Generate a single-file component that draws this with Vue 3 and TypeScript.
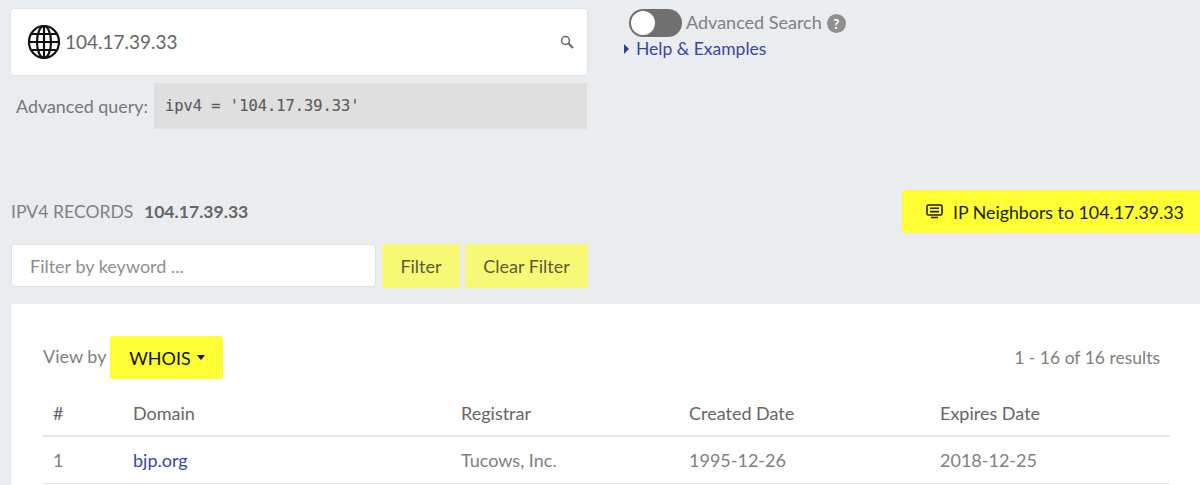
<script setup lang="ts">
interface Row { n: number; domain: string; registrar: string; created: string; expires: string }
const rows: Row[] = [{ n: 1, domain: 'bjp.org', registrar: 'Tucows, Inc.', created: '1995-12-26', expires: '2018-12-25' }]
const ip = '104.17.39.33'
</script>

<template>
  <div class="page">
    <div class="top">
      <div class="left">
        <div class="search">
          <svg class="globe" width="34" height="36" viewBox="0 0 34 36" fill="none" stroke="#111" stroke-width="2.2">
            <ellipse cx="17" cy="18" rx="15" ry="16" />
            <ellipse cx="17" cy="18" rx="7" ry="16" />
            <path d="M17 2v32M2 18h30M4.5 10h25M4.5 26h25" />
          </svg>
          <span class="ip">{{ ip }}</span>
          <svg class="mag" width="14" height="14" viewBox="0 0 14 14" fill="none" stroke="#666" stroke-width="1.5">
            <circle cx="5.5" cy="5.5" r="3.9" />
            <path d="M8.5 8.5l4.5 4.5" stroke-width="2" />
          </svg>
        </div>
        <div class="adv">
          <span class="adv-label">Advanced query:</span>
          <code class="adv-code">ipv4 = '{{ ip }}'</code>
        </div>
      </div>
      <div class="right">
        <div class="toggle-row">
          <span class="toggle"><span class="knob"></span></span>
          <span class="adv-text">Advanced Search</span>
          <span class="help">?</span>
        </div>
        <a class="examples"><span class="tri"></span>Help &amp; Examples</a>
      </div>
    </div>

    <div class="records">
      <div class="rec-title">IPV4 RECORDS <b>{{ ip }}</b></div>
      <button class="neighbors">
        <svg width="17" height="15" viewBox="0 0 17 15" fill="none" stroke="#222" stroke-width="1.6">
          <rect x="1" y="1" width="15" height="10" rx="1.5" />
          <path d="M4 4.2h9M4 7.6h9M5 13.5h7" />
        </svg>
        IP Neighbors to {{ ip }}
      </button>
    </div>

    <div class="filter-row">
      <input class="filter-input" placeholder="Filter by keyword ..." />
      <button class="soft filter-btn">Filter</button>
      <button class="soft clear-btn">Clear Filter</button>
    </div>

    <section class="card">
      <div class="view-row">
        <div class="view-left">
          <span class="view-label">View by</span>
          <button class="whois">WHOIS<span class="caret"></span></button>
        </div>
        <span class="results">1 - 16 of 16 results</span>
      </div>
      <table>
        <thead>
          <tr>
            <th class="c1">#</th>
            <th class="c2">Domain</th>
            <th class="c3">Registrar</th>
            <th class="c4">Created Date</th>
            <th>Expires Date</th>
          </tr>
        </thead>
        <tbody>
          <tr v-for="r in rows" :key="r.n">
            <td>{{ r.n }}</td>
            <td><a>{{ r.domain }}</a></td>
            <td>{{ r.registrar }}</td>
            <td>{{ r.created }}</td>
            <td>{{ r.expires }}</td>
          </tr>
        </tbody>
      </table>
    </section>
  </div>
</template>

<style>
html, body { margin: 0; background: #eaedf0; }
</style>

<style scoped>
.page {
  width: 1200px;
  height: 485px;
  overflow: hidden;
  box-sizing: border-box;
  padding: 9px 0 0 11px;
  background: #eaedf0;
  font-family: "Lato", "Open Sans", sans-serif;
  font-size: 18px;
  color: #6c6c6c;
}
.top { display: flex; height: 181px; }
.left { width: 576px; }
.search {
  height: 66px;
  background: #fff;
  border-radius: 3px;
  box-shadow: 0 0 2px rgba(0, 0, 0, 0.12);
  display: flex;
  align-items: center;
  padding: 0 13px 0 16px;
  box-sizing: border-box;
}
.globe { flex: none; }
.ip { margin: -2px 0 0 4px; font-size: 19px; color: #666; flex: 1; }
.adv { display: flex; align-items: center; margin-top: 8px; }
.adv-label { width: 143px; padding-left: 5px; box-sizing: border-box; color: #777; font-size: 17.9px; }
.adv-code {
  flex: 1;
  height: 46px;
  line-height: 46px;
  background: #dfdfdf;
  padding-left: 11px;
  font-family: "DejaVu Sans Mono", monospace;
  font-size: 15.4px;
  font-weight: 400;
  color: #5c5c5c;
  -webkit-text-stroke: 0.15px #5c5c5c;
}
.right { margin-left: 37px; }
.toggle-row { display: flex; align-items: center; margin-left: 5px; height: 28px; }
.toggle {
  width: 53px;
  height: 28px;
  background: #707070;
  border-radius: 14px;
  box-sizing: border-box;
  padding: 2px;
  flex: none;
}
.knob { display: block; width: 24px; height: 24px; background: #fff; border-radius: 50%; }
.adv-text { margin: -2px 0 0 4px; font-size: 18px; color: #808080; }
.help {
  margin-left: 5px;
  width: 19px;
  height: 19px;
  border-radius: 50%;
  background: #8f8f8f;
  color: #fff;
  font-size: 13px;
  font-weight: 700;
  text-align: center;
  line-height: 20px;
}
.examples { display: flex; align-items: center; color: #3a479f; font-size: 17.5px; line-height: 24px; }
.tri {
  width: 0;
  height: 0;
  border-left: 5px solid #33409a;
  border-top: 5px solid transparent;
  border-bottom: 5px solid transparent;
  margin-right: 7px;
}
.records { display: flex; justify-content: space-between; align-items: center; height: 43px; }
.rec-title { font-size: 17.6px; color: #808080; }
.rec-title b { margin-left: 6px; color: #666; font-weight: 700; }
.neighbors {
  width: 298px;
  height: 43px;
  background: #ffff33;
  border: 0;
  border-radius: 3px 0 0 3px;
  display: flex;
  align-items: center;
  gap: 10px;
  font: inherit;
  font-size: 17.8px;
  color: #1d1d1d;
  padding: 0 0 0 24px;
}
.filter-row { display: flex; margin-top: 11px; align-items: flex-start; }
.filter-input {
  width: 365px;
  height: 43px;
  box-sizing: border-box;
  background: #fff;
  border: 1px solid #e0e3e6;
  border-radius: 3px;
  padding: 0 18px;
  font: inherit;
  outline: none;
}
.filter-input::placeholder { color: #8f8f8f; opacity: 1; }
.soft {
  height: 44px;
  background: #f8f877;
  border: 0;
  border-radius: 3px;
  font: inherit;
  color: #5b5b35;
  padding: 0;
}
.filter-btn { width: 78px; margin-left: 6px; }
.clear-btn { width: 123px; margin-left: 5px; }
.card {
  margin-top: 16px;
  background: #fff;
  height: 200px;
  padding: 32px 30px 0 32px;
  box-sizing: border-box;
}
.view-row { display: flex; justify-content: space-between; align-items: center; height: 43px; padding-right: 10px; }
.view-left { display: flex; align-items: center; gap: 4px; }
.view-label { color: #808080; margin-top: -3px; }
.whois {
  width: 113px;
  height: 43px;
  background: #ffff33;
  border: 0;
  border-radius: 3px;
  font: inherit;
  color: #111;
  display: flex;
  align-items: center;
  justify-content: center;
  padding: 0;
}
.caret {
  margin-left: 6px;
  border-top: 5px solid #111;
  border-left: 4.5px solid transparent;
  border-right: 4.5px solid transparent;
}
.results { color: #808080; font-size: 17.5px; }
table { width: 100%; border-collapse: collapse; margin-top: 14px; table-layout: fixed; }
th, td { text-align: left; padding: 0 0 0 10px; font-size: 18px; }
th { height: 43px; font-weight: 400; color: #666; border-bottom: 2px solid #e6e6e6; box-sizing: border-box; padding-bottom: 2px; }
td { height: 46px; color: #808080; border-bottom: 1px solid #e6e6e6; }
td a { color: #3a479f; }
.c1 { width: 80px; }
.c2 { width: 328px; }
.c3 { width: 228px; }
.c4 { width: 251px; }
</style>
